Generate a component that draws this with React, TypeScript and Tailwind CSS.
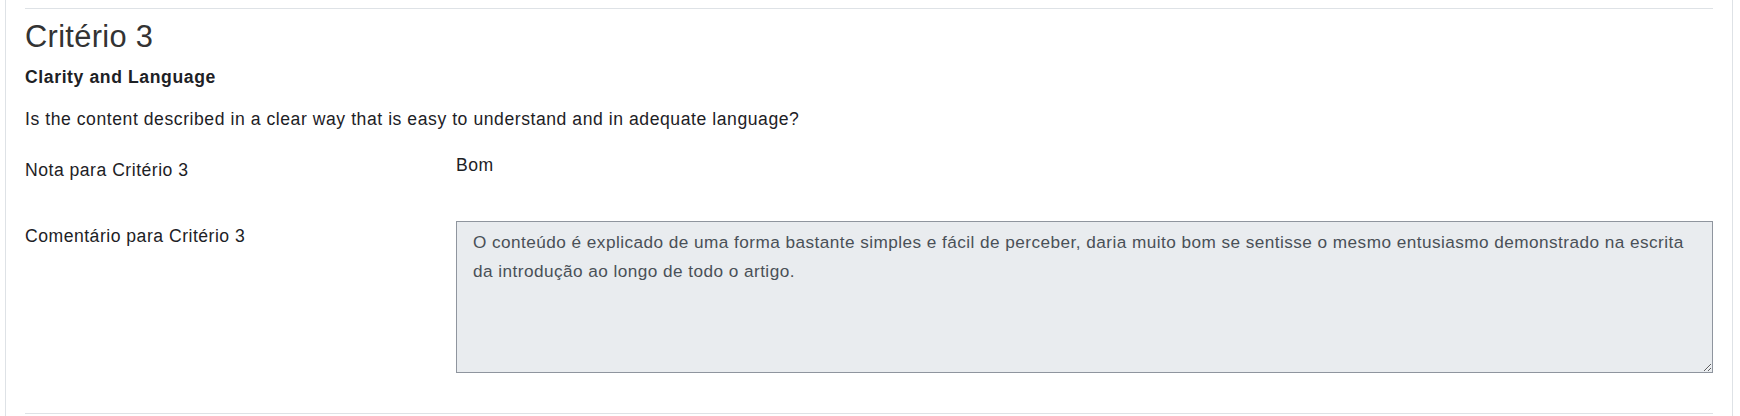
const comment =
  'O conteúdo é explicado de uma forma bastante simples e fácil de perceber, daria muito bom se sentisse o mesmo entusiasmo demonstrado na escrita da introdução ao longo de todo o artigo.';

export default function App() {
  return (
    <div className="min-h-screen bg-white pl-[5px] pr-[7px] font-['Liberation_Sans',Arial,sans-serif] text-[#1d2125]">
      <div className="min-h-[416px] border-x border-[#dee2e6] px-[19px] pt-[8px]">
        <hr className="border-t border-[#dee2e6]" />

        <h3 className="mt-[9px] text-[30.8px] leading-[37px] font-normal tracking-[0.33px] text-[#333]">Critério 3</h3>
        <h5 className="mt-[9px] text-[17.6px] leading-[26.4px] font-bold tracking-[0.6px]">Clarity and Language</h5>
        <p className="mt-[16px] text-[17.6px] leading-[26.4px] tracking-[0.55px]">
          Is the content described in a clear way that is easy to understand and in adequate language?
        </p>

        <div className="mt-[20px] grid grid-cols-[431px_1fr] text-[17.6px] leading-[26.4px] tracking-[0.5px]">
          <div className="pt-[4px]">Nota para Critério 3</div>
          <div className="mt-[-1px]">Bom</div>
        </div>

        <div className="mt-[40px] grid grid-cols-[431px_1fr] text-[17.6px] leading-[26.4px] tracking-[0.5px]">
          <label htmlFor="comment3">Comentário para Critério 3</label>
          <textarea
            id="comment3"
            readOnly
            value={comment}
            className="mt-[-2px] h-[152px] w-full rounded-none border border-[#8f959e] bg-[#e9ecef] pt-[6px] pr-[12px] pl-[16px] text-[17.2px] leading-[29px] tracking-[0.45px] text-[#495057] outline-none"
          />
        </div>

        <hr className="mt-[40px] border-t border-[#dee2e6]" />
      </div>
    </div>
  );
}
